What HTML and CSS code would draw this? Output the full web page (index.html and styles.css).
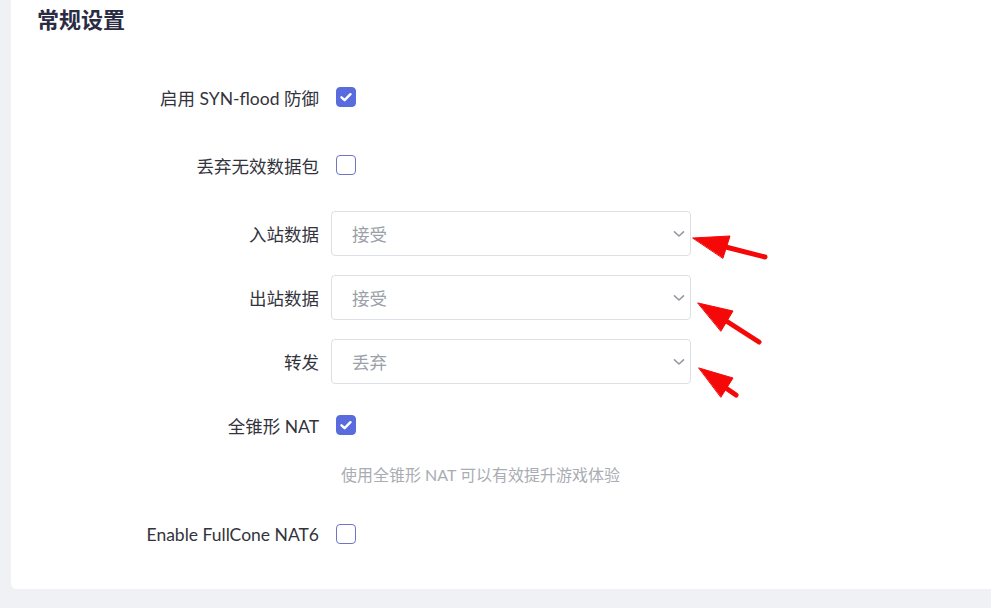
FILE: index.html
```html
<!DOCTYPE html>
<html lang="zh-CN">
<head>
<meta charset="utf-8">
<title>常规设置</title>
<link rel="stylesheet" href="styles.css">
</head>
<body>
<div class="page">
  <div class="card">
    <h2 class="title">常规设置</h2>
    <div class="form">
      <div class="row row-check">
        <label class="label">启用 SYN-flood 防御</label>
        <div class="control"><span class="cb cb-on"><svg viewBox="0 0 20 20" width="20" height="20"><path d="M5.5 10.3 L8.6 13.2 L14.5 7.2" fill="none" stroke="#fff" stroke-width="2.4" stroke-linecap="round" stroke-linejoin="round"/></svg></span></div>
      </div>
      <div class="row row-check">
        <label class="label">丢弃无效数据包</label>
        <div class="control"><span class="cb"></span></div>
      </div>
      <div class="row row-select">
        <label class="label">入站数据</label>
        <div class="control"><div class="select"><span>接受</span><svg class="chev" viewBox="0 0 12 8" width="12" height="8"><path d="M1.5 1.8 L6 6 L10.5 1.8" fill="none" stroke="#959aa3" stroke-width="1.6" stroke-linecap="round" stroke-linejoin="round"/></svg></div></div>
      </div>
      <div class="row row-select">
        <label class="label">出站数据</label>
        <div class="control"><div class="select"><span>接受</span><svg class="chev" viewBox="0 0 12 8" width="12" height="8"><path d="M1.5 1.8 L6 6 L10.5 1.8" fill="none" stroke="#959aa3" stroke-width="1.6" stroke-linecap="round" stroke-linejoin="round"/></svg></div></div>
      </div>
      <div class="row row-select">
        <label class="label">转发</label>
        <div class="control"><div class="select"><span>丢弃</span><svg class="chev" viewBox="0 0 12 8" width="12" height="8"><path d="M1.5 1.8 L6 6 L10.5 1.8" fill="none" stroke="#959aa3" stroke-width="1.6" stroke-linecap="round" stroke-linejoin="round"/></svg></div></div>
      </div>
      <div class="row row-nat">
        <label class="label">全锥形 NAT</label>
        <div class="control"><span class="cb cb-on"><svg viewBox="0 0 20 20" width="20" height="20"><path d="M5.5 10.3 L8.6 13.2 L14.5 7.2" fill="none" stroke="#fff" stroke-width="2.4" stroke-linecap="round" stroke-linejoin="round"/></svg></span></div>
      </div>
      <div class="row row-hint">
        <span></span>
        <div class="hint">使用全锥形 NAT 可以有效提升游戏体验</div>
      </div>
      <div class="row row-last">
        <label class="label">Enable FullCone NAT6</label>
        <div class="control"><span class="cb"></span></div>
      </div>
    </div>
  </div>
  <svg class="annot" width="991" height="608" viewBox="0 0 991 608">
    <g fill="#f50808" stroke="#f50808" stroke-linecap="round" stroke-linejoin="round">
      <polygon points="693,238 730,236 723,258" stroke-width="1"/>
      <line x1="718" y1="245" x2="765" y2="257" stroke-width="5"/>
      <polygon points="698,303 733,311 721,331" stroke-width="1"/>
      <line x1="720" y1="317" x2="759" y2="342" stroke-width="5"/>
      <polygon points="699,368 733,378 721,397" stroke-width="1"/>
      <line x1="720" y1="384" x2="736" y2="395" stroke-width="5"/>
    </g>
  </svg>
</div>
</body>
</html>
```

FILE: styles.css
```css
html, body {
  margin: 0;
  padding: 0;
  background: #f0f1f4;
}
body {
  font-family: Lato, "Noto Sans CJK SC", sans-serif;
  color: #32323e;
}
.page {
  position: relative;
  width: 991px;
  height: 608px;
  overflow: hidden;
  padding-left: 11px;
  box-sizing: border-box;
}
.card {
  background: #fff;
  border-radius: 0 0 0 5px;
  padding-bottom: 33px;
  width: 1000px;
}
.title {
  margin: 0;
  padding-left: 26px;
  font-family: Inter, "Noto Sans CJK SC", sans-serif;
  font-size: 22px;
  line-height: 40px;
  font-weight: 700;
  color: #2b2c43;
}
.form {
  padding-top: 35px;
}
.row {
  display: grid;
  grid-template-columns: 308px 1fr;
  column-gap: 12px;
  align-items: center;
  height: 44px;
}
.row-check { margin-bottom: 24px; }
.row-select { margin-bottom: 20px; }
.row-nat { margin-bottom: 15px; }
.row-hint { height: 20px; margin-bottom: 30px; }
.label {
  text-align: right;
  font-size: 17.5px;
  color: #33333d;
  white-space: nowrap;
}
.control {
  display: flex;
  align-items: center;
}
.cb {
  display: block;
  width: 20px;
  height: 20px;
  box-sizing: border-box;
  margin-left: 5px;
  border: 1.5px solid #6d75c6;
  border-radius: 4px;
  background: #fff;
}
.cb-on {
  background: #5a6cdd;
  border-color: #5a6cdd;
  position: relative;
}
.cb-on svg {
  position: absolute;
  left: -1.5px;
  top: -1.5px;
}
.select {
  width: 360px;
  height: 45px;
  box-sizing: border-box;
  border: 1px solid #dcdfe5;
  border-radius: 4px;
  padding: 0 5px 0 20px;
  display: flex;
  align-items: center;
  justify-content: space-between;
  font-size: 17.5px;
  color: #9aa0a8;
}
.chev {
  display: block;
}
.hint {
  padding-left: 10px;
  font-size: 16px;
  color: #a9acb3;
  white-space: nowrap;
}
.annot {
  position: absolute;
  left: 0;
  top: 0;
  pointer-events: none;
}
```
